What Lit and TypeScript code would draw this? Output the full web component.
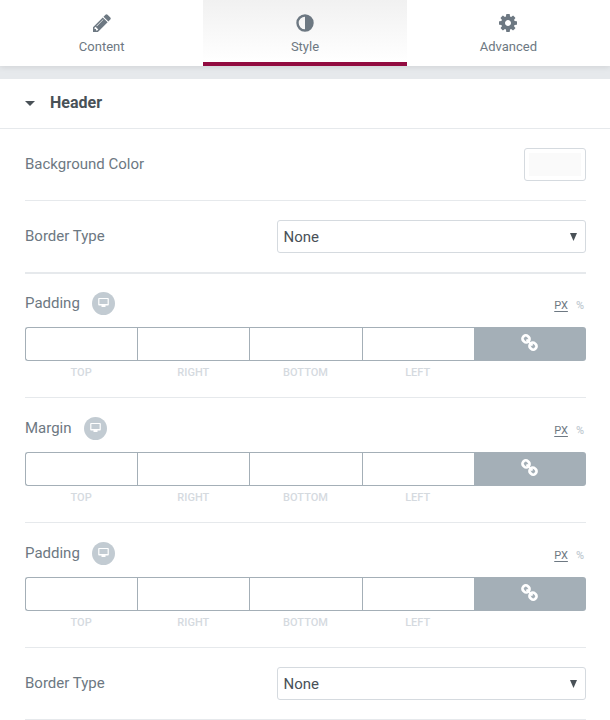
import { LitElement, html, css } from "lit";
import { customElement, property, state } from "lit/decorators.js";
import { classMap } from "lit/directives/class-map.js";

const pencilIcon = html`<svg class="icon" viewBox="128 128 1536 1536" aria-hidden="true">
  <path d="M491 1536l91-91-235-235-91 91v107h128v128h107zm523-928q0-22-22-22-10 0-17 7l-542 542q-7 7-7 17 0 22 22 22 10 0 17-7l542-542q7-7 7-17zm-54-192l416 416-832 832h-416v-416zm683 96q0 53-37 90l-166 166-416-416 166-165q36-38 90-38 53 0 91 38l235 234q37 39 37 91z"/>
</svg>`;

const contrastIcon = html`<svg class="icon" viewBox="0 0 18 18" aria-hidden="true">
  <circle cx="9" cy="9" r="7.5" fill="none" stroke="currentColor" stroke-width="2.4"/>
  <path d="M9 1.5a7.5 7.5 0 0 1 0 15z"/>
</svg>`;

const gearIcon = html`<svg class="icon" viewBox="128 128 1536 1536" aria-hidden="true">
  <path d="M1152 896q0-106-75-181t-181-75-181 75-75 181 75 181 181 75 181-75 75-181zm512-109v222q0 12-8 23t-20 13l-185 28q-19 54-39 91 35 50 107 138 10 12 10 25t-9 23q-27 37-99 108t-94 71q-12 0-26-9l-138-108q-44 23-91 38-16 136-29 186-7 28-36 28h-222q-14 0-24.500-8.500t-11.500-21.500l-28-184q-49-16-90-37l-141 107q-10 9-25 9-14 0-25-11-126-114-165-168-7-10-7-23 0-12 8-23 15-21 51-66.500t54-70.500q-27-50-41-99l-183-27q-13-2-21-12.500t-8-23.500v-222q0-12 8-23t19-13l186-28q14-46 39-92-40-57-107-138-10-12-10-24 0-10 9-23 26-36 98.500-107.500t94.500-71.500q13 0 26 10l138 107q44-23 91-38 16-136 29-186 7-28 36-28h222q14 0 24.500 8.500t11.500 21.500l28 184q49 16 90 37l142-107q9-9 24-9 13 0 25 10 129 119 165 170 7 8 7 22 0 12-8 23-15 21-51 66.500t-54 70.500q26 50 41 98l183 28q13 2 21 12.500t8 23.500z"/>
</svg>`;

type Tab = { name: string; icon: unknown };

const tabs: Tab[] = [
  { name: "Content", icon: pencilIcon },
  { name: "Style", icon: contrastIcon },
  { name: "Advanced", icon: gearIcon },
];

@customElement("select-control")
export class SelectControl extends LitElement {
  static styles = css`
    :host {
      display: flex;
      align-items: center;
      justify-content: space-between;
      padding: 19px 0;
      border-bottom: 1px solid #e6e9ec;
    }
    .label {
      padding-bottom: 2px;
      color: #6d7882;
      line-height: 18px;
    }
    .field {
      position: relative;
      width: 55%;
      color: #495157;
    }
    .select {
      display: block;
      appearance: none;
      box-sizing: border-box;
      width: 100%;
      height: 33px;
      margin: 0;
      padding: 0 24px 0 5px;
      border: 1px solid #d5dadf;
      border-radius: 3px;
      background: #fff;
      color: inherit;
      font: inherit;
    }
    .arrow {
      position: absolute;
      top: 13px;
      right: 9px;
      width: 7px;
      height: 8px;
      fill: currentColor;
      pointer-events: none;
    }
  `;

  @property() label = "";

  render() {
    return html`
      <label class="label" for="choice">${this.label}</label>
      <div class="field">
        <select class="select" id="choice">
          <option>None</option>
          <option>Solid</option>
          <option>Double</option>
          <option>Dotted</option>
          <option>Dashed</option>
        </select>
        <svg class="arrow" viewBox="0 0 7 8" aria-hidden="true"><path d="M0 0h7L3.500 8z"/></svg>
      </div>
    `;
  }
}

@customElement("dimensions-control")
export class DimensionsControl extends LitElement {
  static styles = css`
    :host {
      display: block;
      padding: 19px 0 18px;
      border-bottom: 1px solid #e6e9ec;
    }
    .title {
      display: flex;
      align-items: center;
      height: 23px;
      margin-bottom: 12px;
      color: #6d7882;
    }
    .name {
      padding-bottom: 2px;
    }
    .device {
      display: grid;
      place-items: center;
      width: 23px;
      height: 23px;
      margin: 0 auto 0 12px;
      padding: 0 0 2px;
      border: 0;
      border-radius: 50%;
      background: #c2cbd2;
      color: #fff;
    }
    .screen {
      width: 11px;
      height: 9px;
    }
    .units {
      display: flex;
      gap: 8px;
      padding: 3px 2px 0 0;
    }
    .unit {
      padding: 0;
      border: 0;
      background: none;
      color: #c2cbd2;
      font: inherit;
      font-size: 11px;
      font-weight: 500;
      line-height: 13px;
    }
    .unit.on {
      color: #6d7882;
      font-weight: 400;
      text-decoration: underline;
      text-underline-offset: 2px;
    }
    .sides {
      display: grid;
      grid-template-columns: repeat(5, 1fr);
    }
    .side {
      display: flex;
      flex-direction: column;
      gap: 5px;
      color: #d5dadf;
      font-size: 11px;
      font-weight: 500;
      line-height: 13px;
      text-align: center;
    }
    .value {
      box-sizing: border-box;
      width: 100%;
      height: 34px;
      padding: 0 8px;
      border: 1px solid #a4afb7;
      border-right: 0;
      border-radius: 0;
      outline: 0;
      background: #fff;
      color: #495157;
      font: inherit;
      text-align: center;
    }
    .side:first-child .value {
      border-radius: 3px 0 0 3px;
    }
    .link {
      display: grid;
      place-items: center;
      height: 34px;
      padding: 0 0 4px;
      border: 0;
      border-radius: 0 3px 3px 0;
      background: #a4afb7;
      color: #fff;
    }
    .chain {
      width: 17px;
      height: 17px;
    }
  `;

  @property() label = "";
  @state() private unit = "PX";

  render() {
    return html`
      <div class="title">
        <span class="name">${this.label}</span>
        <button class="device" aria-label="Desktop">
          <svg class="screen" viewBox="0 0 11 9" aria-hidden="true">
            <path fill="currentColor" fill-rule="evenodd" d="M1 0h9q.8 0 .8.8v6q0 .8-.8.8H7.500V9h-4V7.600H1q-.8 0-.8-.8v-6Q.2 0 1 0zm.4 1.100v4.900h8.200V1.100z"/>
          </svg>
        </button>
        <div class="units">
          ${["PX", "%"].map(
            (u) => html`<button
              class=${classMap({ unit: true, on: u === this.unit })}
              @click=${() => (this.unit = u)}
            >${u}</button>`
          )}
        </div>
      </div>
      <div class="sides">
        ${["TOP", "RIGHT", "BOTTOM", "LEFT"].map(
          (side) => html`<label class="side">
            <input class="value" type="text" inputmode="numeric" />
            <span>${side}</span>
          </label>`
        )}
        <button class="link" aria-label="Link values together">
          <svg class="chain" viewBox="0 0 17 17" aria-hidden="true">
            <g fill="none" stroke="currentColor" stroke-width="2.700">
              <rect x="1.500" y="1.700" width="7" height="6.400" rx="2.900" transform="rotate(45 5 4.900)"/>
              <rect x="8.500" y="8.900" width="7" height="6.400" rx="2.900" transform="rotate(45 12 12.100)"/>
              <path d="M5.500 5.500l6 6" stroke-width="2"/>
            </g>
          </svg>
        </button>
      </div>
    `;
  }
}

@customElement("app-root")
export class AppRoot extends LitElement {
  static styles = css`
    :host {
      display: block;
      background: #fff;
      color: #6d7882;
      font: 15px Roboto, "Liberation Sans", sans-serif;
    }
    .tabs {
      position: relative;
      display: grid;
      grid-template-columns: repeat(3, 1fr);
      background: #fff;
      box-shadow: 0 1px 6px rgba(0, 0, 0, 0.1);
    }
    .tab {
      display: flex;
      flex-direction: column;
      align-items: center;
      gap: 7px;
      height: 66px;
      padding: 14px 0 0;
      border: 0;
      border-bottom: 4px solid transparent;
      background: none;
      color: #6d7882;
      font: inherit;
      font-size: 13px;
      line-height: 16px;
    }
    .tab.on {
      border-bottom-color: #920b40;
      background: linear-gradient(#f1f1f1, #fff) padding-box;
    }
    .icon {
      width: 18px;
      height: 18px;
      fill: currentColor;
    }
    .section {
      border-top: 13px solid #e6e9ec;
    }
    .heading {
      margin: 0;
      border-bottom: 1px solid #e6e9ec;
    }
    .toggle {
      display: flex;
      align-items: center;
      gap: 15px;
      width: 100%;
      height: 49px;
      padding: 0 25px 2px;
      border: 0;
      background: none;
      color: #495157;
      font: inherit;
      font-size: 16px;
      font-weight: 700;
    }
    .caret {
      width: 10px;
      height: 5px;
      margin-top: 2px;
      fill: currentColor;
    }
    .controls {
      padding: 0 24px 0 25px;
    }
    .color {
      display: flex;
      align-items: center;
      justify-content: space-between;
      padding: 19px 0;
      border-bottom: 1px solid #e6e9ec;
    }
    .name {
      padding-bottom: 2px;
    }
    .swatch {
      appearance: none;
      box-sizing: border-box;
      width: 62px;
      height: 33px;
      padding: 4px;
      border: 1px solid #d5dadf;
      border-radius: 3px;
      background: #fff;
    }
    .swatch::-webkit-color-swatch-wrapper {
      padding: 0;
    }
    .swatch::-webkit-color-swatch {
      border: 0;
    }
    .group-end {
      box-shadow: 0 1px #e6e9ec;
    }
  `;

  @state() private active = "Style";
  @state() private open = true;

  render() {
    return html`
      <nav class="tabs">
        ${tabs.map(
          (tab) => html`<button
            class=${classMap({ tab: true, on: tab.name === this.active })}
            @click=${() => (this.active = tab.name)}
          >
            ${tab.icon}
            <span>${tab.name}</span>
          </button>`
        )}
      </nav>
      <section class="section">
        <h2 class="heading">
          <button class="toggle" aria-expanded=${this.open} @click=${() => (this.open = !this.open)}>
            <svg class="caret" viewBox="0 0 10 5" aria-hidden="true"><path d="M0 0h10L5 5z"/></svg>
            <span>Header</span>
          </button>
        </h2>
        ${this.open
          ? html`<div class="controls">
              <div class="color">
                <label class="name" for="background">Background Color</label>
                <input class="swatch" id="background" type="color" value="#fafafa" />
              </div>
              <select-control class="group-end" label="Border Type"></select-control>
              <dimensions-control label="Padding"></dimensions-control>
              <dimensions-control label="Margin"></dimensions-control>
              <dimensions-control label="Padding"></dimensions-control>
              <select-control label="Border Type"></select-control>
            </div>`
          : null}
      </section>
    `;
  }
}
